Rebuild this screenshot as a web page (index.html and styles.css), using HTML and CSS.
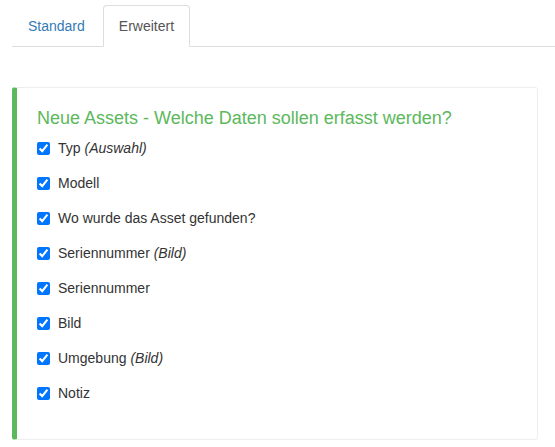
FILE: index.html
```html
<!DOCTYPE html>
<html lang="de">
<head>
<meta charset="utf-8">
<title>Assets</title>
<link rel="stylesheet" href="styles.css">
</head>
<body>
<div class="page">
  <ul class="tabs">
    <li class="tab"><a href="#" class="tab-link">Standard</a></li>
    <li class="tab active"><a href="#" class="tab-link">Erweitert</a></li>
  </ul>
  <div class="callout">
    <h4 class="callout-title">Neue Assets - Welche Daten sollen erfasst werden?</h4>
    <div class="options">
      <label class="option"><input type="checkbox" checked> <span>Typ <i>(Auswahl)</i></span></label>
      <label class="option"><input type="checkbox" checked> <span>Modell</span></label>
      <label class="option"><input type="checkbox" checked> <span>Wo wurde das Asset gefunden?</span></label>
      <label class="option"><input type="checkbox" checked> <span>Seriennummer <i>(Bild)</i></span></label>
      <label class="option"><input type="checkbox" checked> <span>Seriennummer</span></label>
      <label class="option"><input type="checkbox" checked> <span>Bild</span></label>
      <label class="option"><input type="checkbox" checked> <span>Umgebung <i>(Bild)</i></span></label>
      <label class="option"><input type="checkbox" checked> <span>Notiz</span></label>
    </div>
  </div>
</div>
</body>
</html>
```
FILE: styles.css
```css
* { box-sizing: border-box; }
html, body { margin: 0; padding: 0; background: #fff; }
body {
  font-family: "Liberation Sans", Arial, sans-serif;
  font-size: 14px;
  line-height: 20px;
  color: #333;
}
.page {
  padding: 5px 0 0 12px;
}
.tabs {
  list-style: none;
  margin: 0;
  padding: 0;
  display: flex;
  border-bottom: 1px solid #ddd;
}
.tab {
  margin-bottom: -1px;
  margin-right: 2px;
}
.tab-link {
  display: block;
  padding: 10px 15px;
  border: 1px solid transparent;
  border-radius: 4px 4px 0 0;
  color: #337ab7;
  text-decoration: none;
  line-height: 20px;
}
.tab.active .tab-link {
  color: #555;
  background: #fff;
  border-color: #ddd #ddd transparent #ddd;
}
.callout {
  margin: 40px 17px 0 0;
  width: 526px;
  padding: 20px 20px 36px 20px;
  border: 1px solid #eee;
  border-left: 5px solid #5cb85c;
  border-radius: 3px;
}
.callout-title {
  margin: 0 0 10px 0;
  font-size: 18px;
  font-weight: 400;
  line-height: 20px;
  color: #5cb85c;
}
.options {
  display: flex;
  flex-direction: column;
  gap: 15px;
}
.option {
  display: flex;
  align-items: center;
  gap: 8px;
  height: 20px;
  font-weight: 400;
}
.option input {
  margin: 0;
  width: 13px;
  height: 13px;
}
.option i { font-style: italic; }
```
